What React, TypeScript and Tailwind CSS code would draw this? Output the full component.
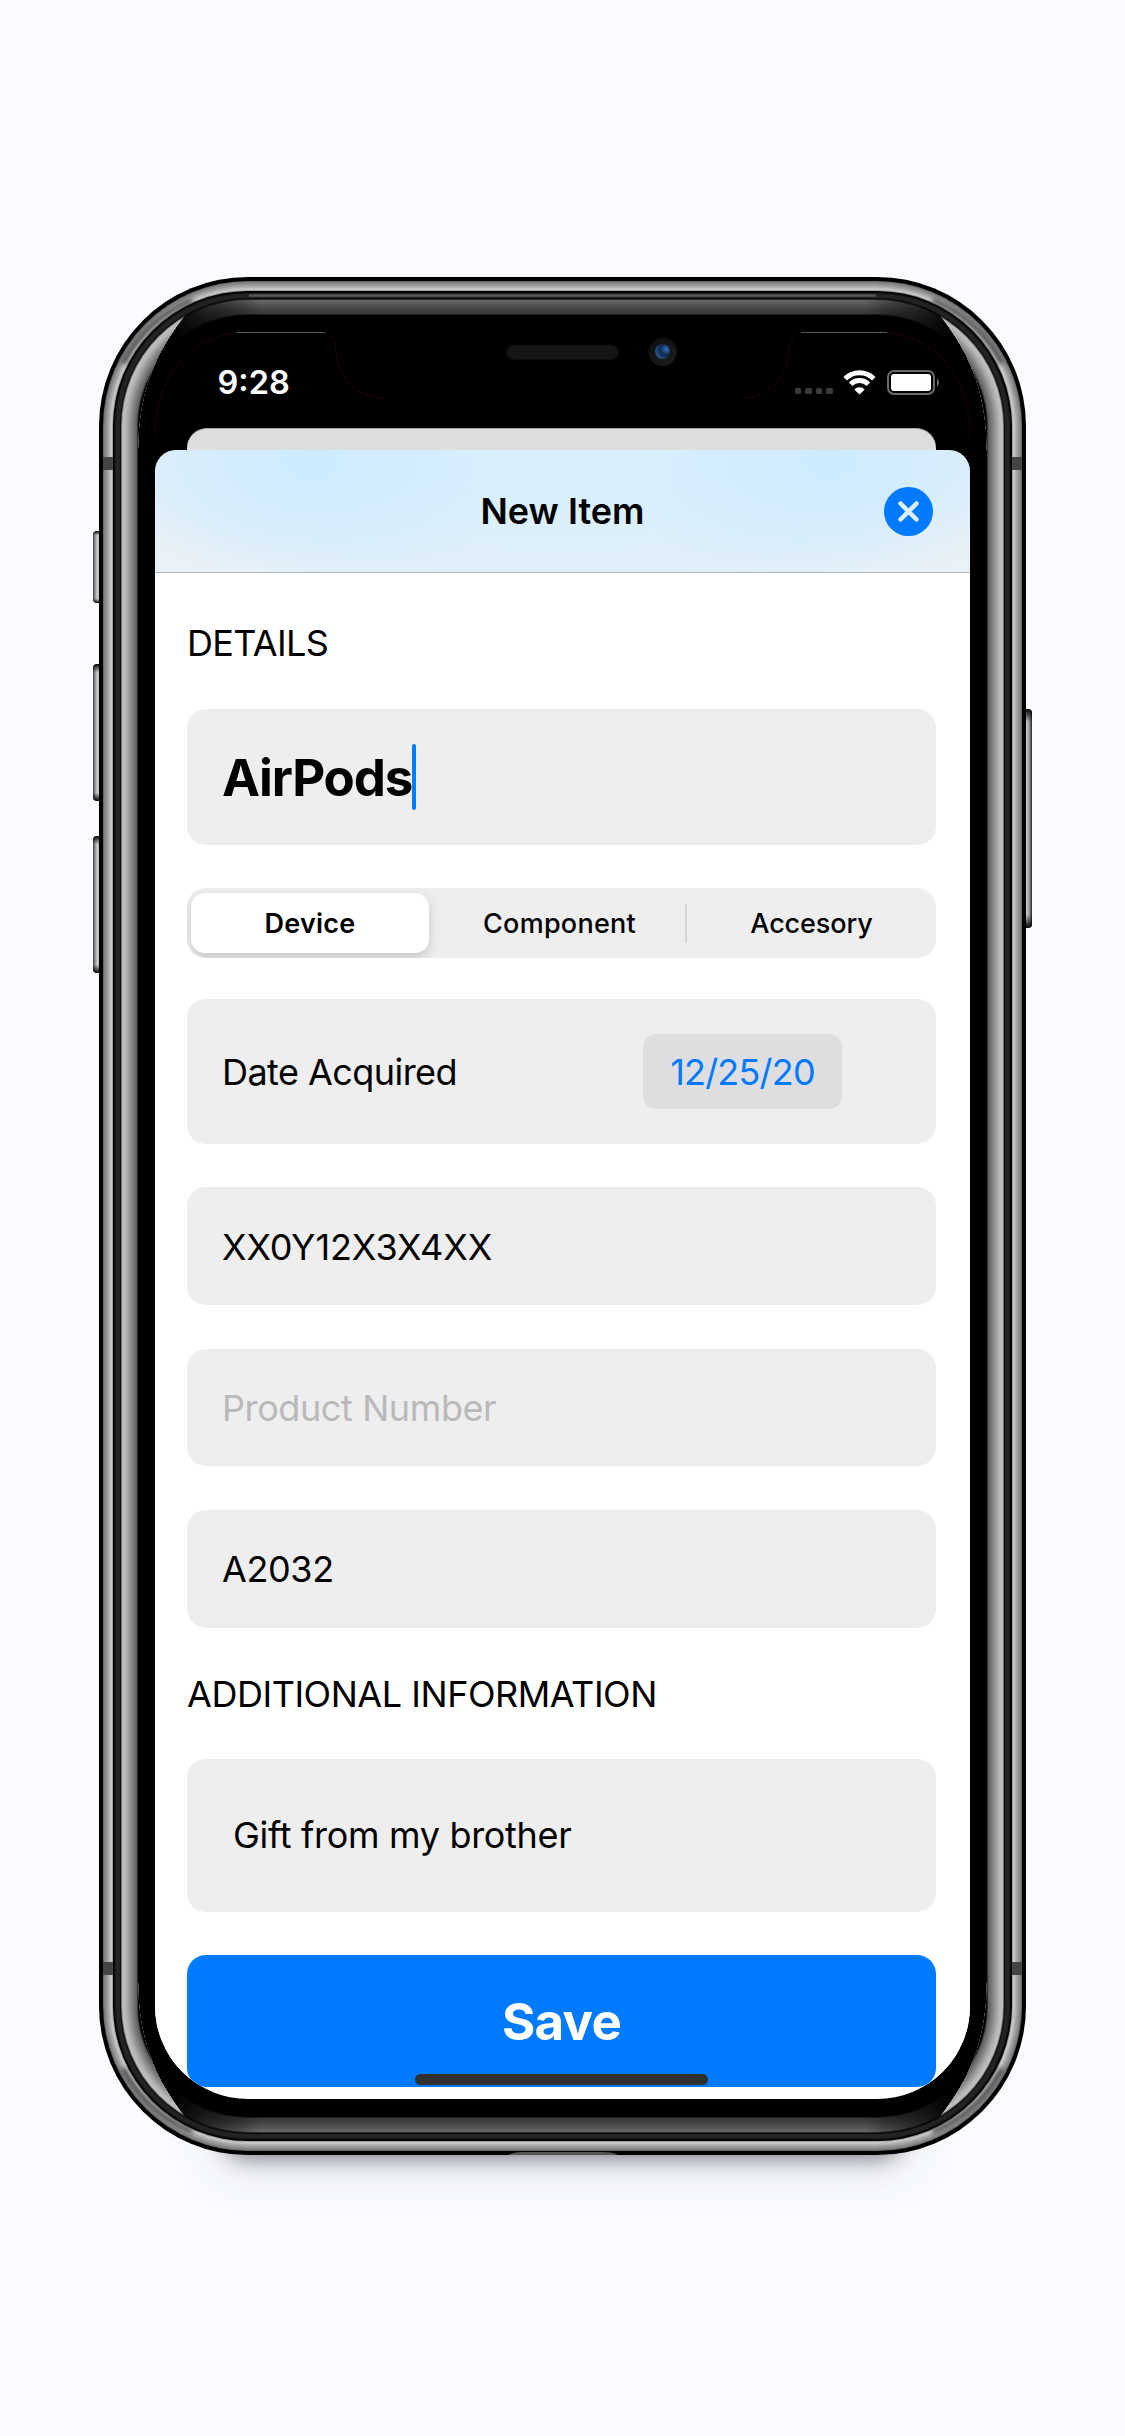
import React from "react";

const W = 927;
const H = 1878;
const R = 149;

function gray(v: number) {
  const n = Math.round(v);
  return `rgb(${n},${n},${n})`;
}

/** Body outline shrunk by `inset` pixels on every side and filled. */
function Layer({ inset, color }: { inset: number; color: string }) {
  return (
    <rect x={inset} y={inset} width={W - 2 * inset} height={H - 2 * inset} rx={R - inset} fill={color} />
  );
}

/** Stacked layers one pixel apart, giving a gradient that follows the corners. */
function layers(from: number, values: number[]) {
  return values.map((v, i) => <Layer key={i} inset={from + i} color={gray(v)} />);
}

const STEEL = [105, 128, 138, 148, 158, 168, 180, 194, 202, 160];
const TOP_GLASS = [40, 102, 98, 94, 90, 86, 82, 78, 74, 70, 67, 64, 62, 60, 58, 30, 0];
const SIDE_GLASS = [110, 190, 190, 186, 182, 176, 168, 160, 152, 144, 136, 128, 120, 112, 104, 94, 50, 0];

function DeviceFrame() {
  return (
    <svg className="absolute inset-0 overflow-visible" width={W} height={H} viewBox={`0 0 ${W} ${H}`}>
      <defs>
        <linearGradient id="button" x1="0" x2="1" y1="0" y2="0">
          <stop offset="0" stopColor="#333" />
          <stop offset="0.18" stopColor="#8a8a8a" />
          <stop offset="0.45" stopColor="#cfcfcf" />
          <stop offset="0.75" stopColor="#999" />
          <stop offset="1" stopColor="#222" />
        </linearGradient>
        <linearGradient id="buttonEnds" x1="0" x2="0" y1="0" y2="1">
          <stop offset="0" stopColor="#000" />
          <stop offset="0.06" stopColor="#000" stopOpacity="0" />
          <stop offset="0.94" stopColor="#000" stopOpacity="0" />
          <stop offset="1" stopColor="#000" />
        </linearGradient>
        <linearGradient id="fadeX" x1="76" x2="851" y1="0" y2="0" gradientUnits="userSpaceOnUse">
          <stop offset="0" stopColor="#fff" stopOpacity="0" />
          <stop offset="0.11" stopColor="#fff" />
          <stop offset="0.89" stopColor="#fff" />
          <stop offset="1" stopColor="#fff" stopOpacity="0" />
        </linearGradient>
        <mask id="topBottom">
          <rect x="70" y="0" width="787" height={H} fill="url(#fadeX)" />
        </mask>
        <clipPath id="sides">
          <path d={`M0 160 L0 0 L88 36 C60 70 39 110 39 175 L39 ${H - 175} C39 ${H - 110} 60 ${H - 70} 88 ${H - 36} L0 ${H} Z`} />
          <path d={`M${W} 160 L${W} 0 L${W - 88} 36 C${W - 60} 70 ${W - 39} 110 ${W - 39} 175 L${W - 39} ${H - 175} C${W - 39} ${H - 110} ${W - 60} ${H - 70} ${W - 88} ${H - 36} L${W} ${H} Z`} />
        </clipPath>
        <filter id="soft" x="-20%" y="-200%" width="140%" height="500%">
          <feGaussianBlur stdDeviation="11" />
        </filter>
        <filter id="softer" x="-20%" y="-200%" width="140%" height="500%">
          <feGaussianBlur stdDeviation="24" />
        </filter>
        <filter id="tiny" x="-30%" y="-30%" width="160%" height="160%">
          <feGaussianBlur stdDeviation="2" />
        </filter>
        <radialGradient id="lens" cx="0.75" cy="0.35" r="0.8">
          <stop offset="0" stopColor="#2f6fb5" />
          <stop offset="0.5" stopColor="#12284f" />
          <stop offset="1" stopColor="#2a5c94" />
        </radialGradient>
        <linearGradient id="camera" x1="0" x2="1" y1="0" y2="1">
          <stop offset="0" stopColor="#0b0b0b" />
          <stop offset="1" stopColor="#1f1f1f" />
        </linearGradient>
      </defs>

      <rect x="126" y={H - 36} width="675" height="38" rx="19" fill="#000" opacity="0.5" filter="url(#soft)" />
      <rect x="110" y={H - 60} width="707" height="76" rx="38" fill="#3a4060" opacity="0.12" filter="url(#softer)" />

      {[
        [254, 72],
        [387, 137],
        [559, 137],
      ].map(([y, h]) => (
        <g key={y}>
          <rect x="-6" y={y} width="10" height={h} rx="4" fill="url(#button)" />
          <rect x="-6" y={y} width="10" height={h} rx="4" fill="url(#buttonEnds)" />
        </g>
      ))}
      <rect x="922" y="432" width="11" height="219" rx="4" fill="url(#button)" />
      <rect x="922" y="432" width="11" height="219" rx="4" fill="url(#buttonEnds)" />

      <Layer inset={0} color="#000" />
      {layers(4, STEEL)}
      {layers(14, [0, 8, 28, 36, 36, 36, 34, 12, 0])}
      <g mask="url(#topBottom)">{layers(22, TOP_GLASS)}</g>
      <path d="M150 18.500 H777" stroke="#555" strokeWidth="2.600" />
      <g clipPath="url(#sides)">{layers(22, SIDE_GLASS)}</g>

      {/* Reflections that darken the steel band at each corner */}
      <g fill="none" stroke="#2c2c2c" strokeWidth="4" strokeLinecap="round" opacity="0.85" filter="url(#tiny)">
        <path d="M25 85 A138 138 0 0 1 92 24" />
        <path d={`M${W - 25} 85 A138 138 0 0 0 ${W - 92} 24`} />
        <path d={`M25 ${H - 85} A138 138 0 0 0 92 ${H - 24}`} />
        <path d={`M${W - 25} ${H - 85} A138 138 0 0 1 ${W - 92} ${H - 24}`} />
      </g>

      {[180, 1685].map((y) => (
        <g key={y} fill="#444">
          <rect x="4" y={y} width="10" height="13" />
          <rect x="913" y={y} width="10" height="13" />
        </g>
      ))}
      <path d={`M409 ${H} Q414 ${H - 3} 424 ${H - 3} H504 Q514 ${H - 3} 519 ${H} Z`} fill="#555" />

      {/* Notch outline, speaker and camera */}
      <g fill="none" stroke="#1c0509" strokeWidth="1">
        <path d="M56 160 C56 95 95 55 150 55 M222 55 Q236 57 237 72 C237 100 258 121 285 121" />
        <path d="M871 160 C871 95 832 55 777 55 M705 55 Q691 57 690 72 C690 100 669 121 642 121" />
      </g>
      <path d="M138 55.500 H226 M702 55.500 H788" stroke="#585858" strokeWidth="1" />
      <rect x="407.500" y="68" width="112" height="14.500" rx="7.250" fill="#151515" stroke="#0c0c0c" />
      <circle cx="563.500" cy="75" r="14" fill="url(#camera)" />
      <circle cx="563.500" cy="74.500" r="7.500" fill="url(#lens)" />
    </svg>
  );
}

function Wifi() {
  return (
    <svg width="33" height="25" viewBox="0 0 33 25">
      <g fill="none" stroke="#fff" strokeWidth="5">
        <path d="M2.200 8.700 A20.300 20.300 0 0 1 30.800 8.700" />
        <path d="M7.600 14.300 A12.600 12.600 0 0 1 25.400 14.300" />
      </g>
      <path d="M16.500 24.500 L11.300 19.400 A7.300 7.300 0 0 1 21.700 19.400 Z" fill="#fff" />
    </svg>
  );
}

function StatusBar() {
  return (
    <div className="flex h-[96px] items-start pt-[38px] pl-[62.5px]">
      <span className="w-[577px] text-[32.5px] leading-[26px] font-semibold text-white">9:28</span>
      <div className="flex h-[25px] items-end gap-[4px] pb-[1px]">
        {[0, 1, 2, 3].map((i) => (
          <i key={i} className="h-[6.5px] w-[6.5px] rounded-[1.5px] bg-[#3a3a3a]" />
        ))}
      </div>
      <div className="ml-[10px]">
        <Wifi />
      </div>
      <div className="ml-[11px] flex items-center gap-[2px]">
        <div className="h-[25px] w-[48px] rounded-[7px] border-2 border-[#6a6a6a] p-[2px]">
          <div className="h-full rounded-[3px] bg-white" />
        </div>
        <svg width="4" height="9" viewBox="0 0 4 9">
          <path d="M0 0 Q4 4.500 0 9 Z" fill="#6a6a6a" />
        </svg>
      </div>
    </div>
  );
}

function Field({ children, className }: { children: React.ReactNode; className: string }) {
  return <div className={`flex items-center rounded-[19px] bg-[#eeeeee] pl-[35px] ${className}`}>{children}</div>;
}

export default function App() {
  return (
    <main className="flex h-[2436px] w-[1125px] items-start overflow-hidden bg-[#f9fbff] pt-[277px] pl-[99px] font-[Inter,sans-serif] text-black">
      <div className="relative h-[1878px] w-[927px] p-[56px] pt-[55px]">
        <DeviceFrame />
        <div className="relative flex h-[1767px] w-[815px] flex-col overflow-hidden rounded-b-[93px]">
          <StatusBar />
          <div className="mr-[34px] ml-[32px] h-[22px] shrink-0 rounded-t-[20px] border-t border-[#a9a9ab] bg-[#dddddf]" />
          <section className="flex-1 bg-[linear-gradient(#000_40px,#fff_40px)]">
            <header className="flex h-[123px] items-center rounded-t-[21px] border-b border-[#b4b8bb] bg-[radial-gradient(ellipse_210px_120px_at_19%_10%,#cdebff,transparent),radial-gradient(ellipse_210px_120px_at_83%_10%,#cdebff,transparent),radial-gradient(ellipse_62%_130%_at_50%_0%,#d9effd_30%,#dfeffa_75%,#e9f1f7)]">
              <span className="ml-[37px] w-[49px]" />
              <h1 className="flex-1 text-center text-[36px] font-semibold">New Item</h1>
              <button className="mr-[37px] flex h-[49px] w-[49px] items-center justify-center rounded-full bg-[#007aff]">
                <svg width="21" height="21" viewBox="0 0 21 21">
                  <path d="M2.500 2.500 L18.500 18.500 M18.500 2.500 L2.500 18.500" stroke="#deeff9" strokeWidth="4.500" strokeLinecap="round" />
                </svg>
              </button>
            </header>

            <div className="flex flex-col bg-white pr-[34px] pl-[32px]">
              <h2 className="mt-[49px] h-[44px] text-[36px] leading-[43px] tracking-[-0.65px]">DETAILS</h2>
              <Field className="mt-[43px] h-[136px]">
                <span className="pt-[2px] text-[51px] font-bold tracking-[-1.15px]">AirPods</span>
                <i className="h-[66px] w-[4px] rounded-[2px] bg-[#007aff]" />
              </Field>

              <div className="mt-[43px] flex h-[70px] items-center overflow-hidden rounded-[19px] bg-[#eeeeee] pl-[4px] text-[27px] font-medium">
                <span className="flex h-[60px] w-[238px] items-center justify-center rounded-[14px] bg-white pt-[2px] font-semibold tracking-[0.2px] shadow-[0_5px_12px_rgba(0,0,0,0.17)]">
                  Device
                </span>
                <span className="flex h-[39px] w-[258px] items-center justify-center border-r-2 border-[#d5d5d9] pt-[2px] pl-[5px] tracking-[0.25px]">
                  Component
                </span>
                <span className="flex flex-1 items-center justify-center pt-[2px] tracking-[-0.1px]">Accesory</span>
              </div>

              <Field className="mt-[41px] h-[145px] text-[36px]">
                <span className="w-[421px] tracking-[-0.55px]">Date Acquired</span>
                <span className="flex h-[75px] w-[199px] items-center justify-center rounded-[13px] bg-[#dedee1] tracking-[-0.8px] text-[#007aff]">
                  12/25/20
                </span>
              </Field>
              <Field className="mt-[43px] h-[118px] pt-px text-[36px] tracking-[-0.1px]">XX0Y12X3X4XX</Field>
              <Field className="mt-[44px] h-[117px] pt-px text-[36px] tracking-[-0.4px] text-[#b9b9bb]">Product Number</Field>
              <Field className="mt-[44px] h-[118px] text-[36px] tracking-[-0.4px]">A2032</Field>
              <h2 className="mt-[44px] h-[44px] text-[36px] leading-[44px] tracking-[-0.46px]">ADDITIONAL INFORMATION</h2>
              <Field className="mt-[43px] h-[153px] text-[36px] tracking-[-0.31px]">
                <span className="pb-[2px] pl-[11px]">Gift from my brother</span>
              </Field>
              <button className="relative mt-[43px] flex h-[132px] items-center justify-center rounded-[19px] bg-[#007aff] pt-[3px] text-[51px] font-bold tracking-[-0.8px] text-white">
                Save
                <i className="absolute bottom-[2.5px] left-[228px] h-[11px] w-[293px] rounded-full bg-[#303030]" />
              </button>
            </div>
          </section>
        </div>
      </div>
    </main>
  );
}
